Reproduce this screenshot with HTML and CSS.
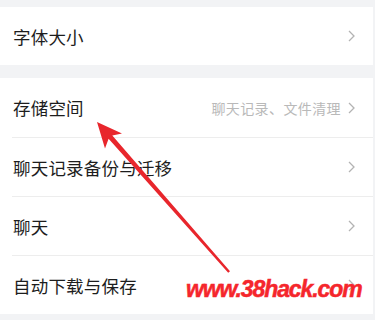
FILE: index.html
```html
<!DOCTYPE html>
<html lang="zh-CN">
<head>
<meta charset="utf-8">
<title>设置</title>
<link rel="stylesheet" href="styles.css">
</head>
<body>
<div class="page">
  <section class="group">
    <div class="row first">
      <span class="label">字体大小</span>
      <span class="right"><svg class="chev" viewBox="0 0 7 12" width="7" height="12"><polyline points="1,1 6,6 1,11"/></svg></span>
    </div>
  </section>
  <section class="group">
    <div class="row tall">
      <span class="label">存储空间</span>
      <span class="right"><span class="sub">聊天记录、文件清理</span><svg class="chev" viewBox="0 0 7 12" width="7" height="12"><polyline points="1,1 6,6 1,11"/></svg></span>
    </div>
    <div class="row">
      <span class="label">聊天记录备份与迁移</span>
      <span class="right"><svg class="chev" viewBox="0 0 7 12" width="7" height="12"><polyline points="1,1 6,6 1,11"/></svg></span>
    </div>
    <div class="row">
      <span class="label">聊天</span>
      <span class="right"><svg class="chev" viewBox="0 0 7 12" width="7" height="12"><polyline points="1,1 6,6 1,11"/></svg></span>
    </div>
    <div class="row last">
      <span class="label">自动下载与保存</span>
      <span class="right"><svg class="chev" viewBox="0 0 7 12" width="7" height="12"><polyline points="1,1 6,6 1,11"/></svg></span>
    </div>
  </section>
  <svg class="arrow" viewBox="0 0 375 320" width="375" height="320">
    <polygon points="97,122 122,133.5 112.3,135.4 230,271.2 228.2,272.8 108.6,138.8 105,148.5"/>
  </svg>
  <div class="watermark">www.38hack.com</div>
</div>
</body>
</html>
```
FILE: styles.css
```css
html, body {
  margin: 0;
  padding: 0;
  background: #f2f3f5;
}
.page {
  position: relative;
  width: 375px;
  height: 320px;
  overflow: hidden;
  padding-top: 7px;
  box-sizing: border-box;
  display: flex;
  flex-direction: column;
  gap: 13px;
  font-family: "Noto Sans CJK SC", "Noto Sans", sans-serif;
}
.group {
  background: #ffffff;
  margin-right: 2px;
  padding-left: 12px;
}
.row {
  height: 58px;
  display: flex;
  align-items: center;
  justify-content: space-between;
  border-bottom: 1px solid #ededed;
  box-sizing: content-box;
}
.row.tall {
  height: 59px;
}
.row.first,
.row.last {
  border-bottom: none;
}
.label {
  font-size: 17.5px;
  color: #1d1d1d;
  padding-left: 1px;
  letter-spacing: 0.2px;
}
.right {
  display: flex;
  align-items: center;
  gap: 7px;
  padding-right: 18px;
}
.sub {
  font-size: 14px;
  color: #b9b9b9;
  letter-spacing: 0.4px;
}
.chev {
  display: block;
}
.chev polyline {
  fill: none;
  stroke: #b3b3b3;
  stroke-width: 1.3;
}
.arrow {
  position: absolute;
  left: 0;
  top: 0;
  pointer-events: none;
}
.arrow polygon {
  fill: #e8262c;
}
.watermark {
  position: absolute;
  left: 186px;
  top: 276px;
  font-family: "Liberation Sans", Arial, sans-serif;
  font-weight: bold;
  font-style: italic;
  font-size: 23px;
  letter-spacing: -1.1px;
  -webkit-text-stroke: 0.5px #f5262c;
  color: #f5262c;
}
```
